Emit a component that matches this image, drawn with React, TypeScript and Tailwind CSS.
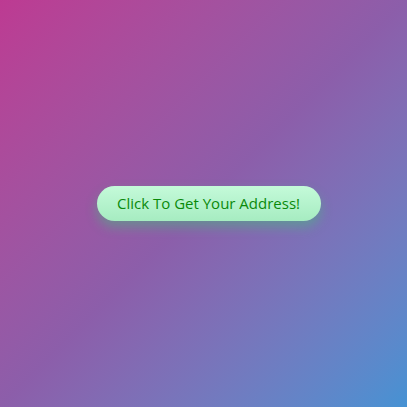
export default function App() {
  return (
    <div className="flex h-[407px] w-[407px] items-center justify-center bg-gradient-to-br from-[#bd3a92] via-[#8c5eaa] to-[#4592d3]">
      <button className="ml-[10px] h-[35px] w-[224px] rounded-full bg-gradient-to-b from-[#c4fad9] to-[#a6ecc1] font-['Open_Sans',sans-serif] text-[15px] text-[#0a8a0a] shadow-[0_6px_12px_rgba(60,200,120,0.45)]">
        Click To Get Your Address!
      </button>
    </div>
  );
}
